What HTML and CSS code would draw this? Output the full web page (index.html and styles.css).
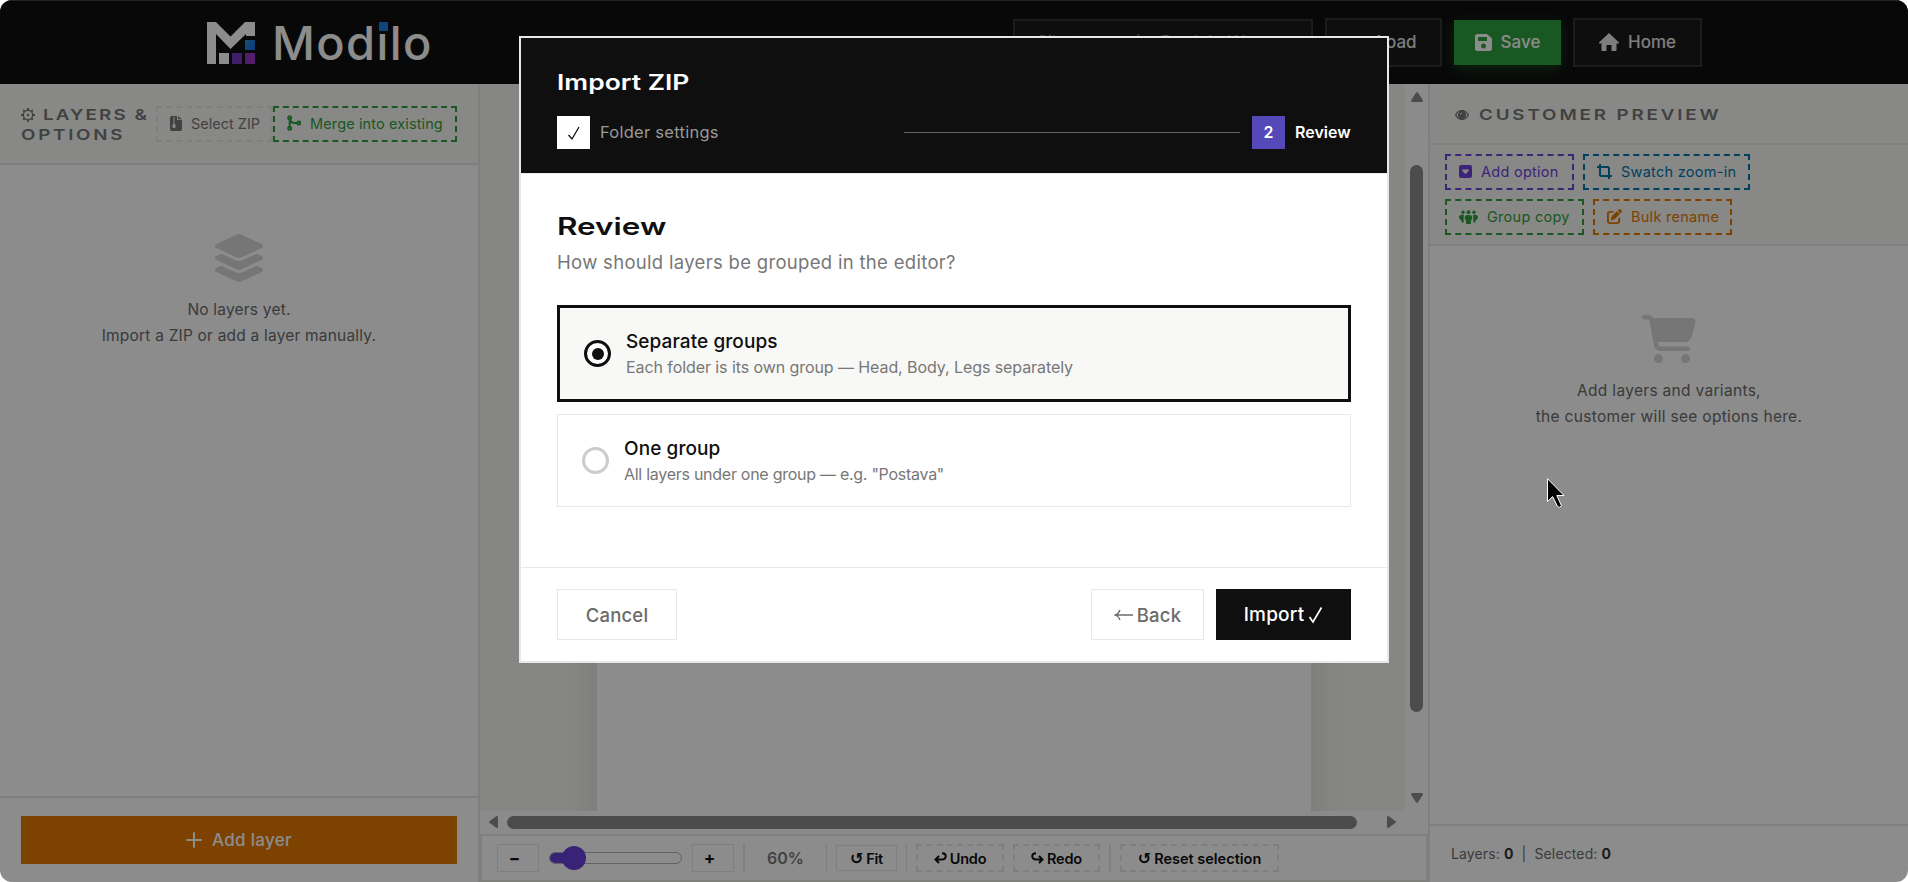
FILE: index.html
```html
<!DOCTYPE html>
<html lang="en">
<head>
    <meta charset="UTF-8">
    <meta name="viewport" content="width=device-width, initial-scale=1.0">
    <title>Modilo</title>
    <link rel="stylesheet" href="styles.css">
</head>
<body>
    <div class="app">
        <header class="topbar">
            <div class="logo">
                <svg class="logo__mark" viewBox="0 0 48 42">
                    <defs>
                        <linearGradient id="blue" x1="0" y1="0" x2="1" y2="1"><stop offset="0" stop-color="#2196c8"/><stop offset="1" stop-color="#1668e8"/></linearGradient>
                        <linearGradient id="violet" x1="0" y1="0" x2="1" y2="1"><stop offset="0" stop-color="#5b3fc0"/><stop offset="1" stop-color="#8a2fc4"/></linearGradient>
                    </defs>
                    <path fill="#fff" d="M0 0H9L23.500 14.500 38 0H48V14H39V12L23.500 27 9 12V42H0zM12 31h10v11H12z"/>
                    <path fill="url(#blue)" d="M38 18h10v10H38z"/>
                    <path fill="url(#violet)" d="M25 31h10v11H25z"/>
                    <path fill="#9a35c4" d="M38 31h10v11H38z"/>
                </svg>
                <span class="logo__text">Mod<span class="logo__i">i</span>lo</span>
            </div>
            <div class="topbar__actions">
                <div class="topbar__input">Silueta na míru Produkt W</div>
                <button class="top-btn top-btn--load">
                    <svg class="icon" width="17" height="15" viewBox="0 0 576 512"><path d="M88.700 223.800L0 375.800V96C0 60.700 28.700 32 64 32H181.500c17 0 33.300 6.700 45.300 18.700L253.300 77.300c12 12 28.300 18.700 45.300 18.700H416c35.300 0 64 28.700 64 64v32H144c-22.800 0-43.800 12.100-55.300 31.800zM144 224H544c24 0 40 24 28 44L460 464c-6 10-16 16-28 16H32c-24 0-40-24-28-44L116 240c6-10 16-16 28-16z"/></svg>
                    <span>Load</span>
                </button>
                <button class="top-btn top-btn--save">
                    <svg class="icon" width="17" height="17" viewBox="0 0 17 17"><path fill-rule="evenodd" d="M2.500 0H12l5 4.500V14.500A2.500 2.500 0 0 1 14.500 17H2.500A2.500 2.500 0 0 1 0 14.500V2.500A2.500 2.500 0 0 1 2.500 0zM3 3v4h9V3zM8.500 9.500a2.500 2.500 0 1 0 .01 0z"/></svg>
                    <span>Save</span>
                </button>
                <button class="top-btn top-btn--home">
                    <svg class="icon" width="20" height="18" viewBox="0 0 20 18"><path d="M10 0L20 9.500V10.500H17.500V17Q17.500 18 16.500 18H12.500V12H7.500V18H3.500Q2.500 18 2.500 17V10.500H0V9.500z"/></svg>
                    <span>Home</span>
                </button>
            </div>
        </header>

        <div class="workspace">
            <section class="panel panel--left">
                <div class="panel__header">
                    <h2 class="panel__title">
                        <svg class="panel__gear" width="14" height="14" viewBox="0 0 14 14"><circle cx="7" cy="7" r="4.700" fill="none" stroke="currentColor" stroke-width="1.400"/><circle cx="7" cy="7" r="1.200"/><path fill="none" stroke="currentColor" stroke-width="1.800" d="M7 0v2M7 12v2M0 7h2M12 7h2M2.200 2.200l1.300 1.300M10.500 10.500l1.300 1.300M2.200 11.800l1.300-1.300M10.500 3.500l1.300-1.300"/></svg>
                        <span class="wide wide--layers">LAYERS &amp;</span>
                        <br>
                        <span class="wide wide--options">OPTIONS</span>
                    </h2>
                    <button class="dash-btn dash-btn--zip">
                        <svg class="icon" width="12" height="15" viewBox="0 0 12 15"><path fill-rule="evenodd" d="M1.800 0H7v4h5v9.200A1.800 1.800 0 0 1 10.200 15H1.800A1.800 1.800 0 0 1 0 13.200V1.800A1.800 1.800 0 0 1 1.800 0zM8 0l4 3.200H8zM3 1.500v1h2v-1zM3 3.500v1h2v-1zM3 5.500v1h2v-1zM3 7.500L2.300 10.500a1.700 1.700 0 1 0 3.400 0L5 7.500z"/></svg>
                        <span>Select ZIP</span>
                    </button>
                    <button class="dash-btn dash-btn--merge">
                        <svg class="icon icon--line" width="14" height="16" viewBox="0 0 14 16"><circle cx="2.700" cy="2.700" r="1.500"/><circle cx="2.700" cy="13.300" r="1.500"/><circle cx="11.800" cy="8" r="1.500"/><path d="M2.700 4.200v7.600M2.900 4.500C3.500 7 5 8 7 8h3.300"/></svg>
                        <span>Merge into existing</span>
                    </button>
                </div>
                <div class="empty empty--layers">
                    <svg class="empty__icon" width="54" height="48" viewBox="0 0 576 512"><path d="M264.500 5.200c14.900-6.900 32.100-6.900 47 0l218.600 101c8.500 3.900 13.900 12.400 13.900 21.800s-5.400 17.900-13.900 21.800l-218.600 101c-14.900 6.900-32.100 6.900-47 0L45.900 149.800C37.400 145.800 32 137.300 32 128s5.400-17.900 13.900-21.800L264.500 5.200zM476.900 209.600l53.200 24.600c8.500 3.900 13.900 12.400 13.900 21.800s-5.400 17.900-13.900 21.800l-218.600 101c-14.900 6.900-32.100 6.900-47 0L45.900 277.800C37.400 273.800 32 265.300 32 256s5.400-17.900 13.900-21.800l53.200-24.600 152 70.200c23.400 10.800 50.400 10.800 73.800 0l152-70.200zm-152 198.200l152-70.200 53.200 24.600c8.500 3.900 13.900 12.400 13.900 21.800s-5.400 17.900-13.900 21.800l-218.600 101c-14.900 6.900-32.100 6.900-47 0L45.900 405.800C37.400 401.800 32 393.300 32 384s5.400-17.900 13.900-21.800l53.200-24.600 152 70.200c23.400 10.800 50.400 10.800 73.800 0z"/></svg>
                    <p class="empty__text">No layers yet.<br>Import a ZIP or add a layer manually.</p>
                </div>
                <div class="panel__footer">
                    <button class="add-btn">
                        <svg width="16" height="16" viewBox="0 0 16 16"><path fill="none" stroke="currentColor" stroke-width="2" stroke-linecap="round" d="M8 1v14M1 8h14"/></svg>
                        <span>Add layer</span>
                    </button>
                </div>
            </section>

            <section class="stage">
                <div class="stage__canvas">
                    <div class="stage__paper"></div>
                </div>
                <div class="vscroll">
                    <svg width="12" height="10" viewBox="0 0 12 10"><path d="M6 0Q6.500 0 7 .8L12 8.500Q12 10 11 10H1Q0 10 0 8.500L5 .8Q5.500 0 6 0z"/></svg>
                    <div class="vscroll__thumb"></div>
                    <svg width="12" height="10" viewBox="0 0 12 10"><path d="M6 10Q6.500 10 7 9.200L12 1.500Q12 0 11 0H1Q0 0 0 1.500L5 9.200Q5.500 10 6 10z"/></svg>
                </div>
                <div class="hscroll">
                    <svg width="9" height="12" viewBox="0 0 9 12"><path d="M0 6Q0 5.500.8 5L7.500 0Q9 0 9 1V11Q9 12 7.500 12L.8 7Q0 6.500 0 6z"/></svg>
                    <div class="hscroll__thumb"></div>
                    <svg width="9" height="12" viewBox="0 0 9 12"><path d="M9 6Q9 5.500 8.200 5L1.500 0Q0 0 0 1V11Q0 12 1.500 12L8.200 7Q9 6.500 9 6z"/></svg>
                </div>
                <div class="toolbar">
                    <button class="tool tool--step">−</button>
                    <div class="slider"><div class="slider__fill"></div><div class="slider__thumb"></div></div>
                    <button class="tool tool--step">+</button>
                    <i class="toolbar__sep toolbar__sep--thick"></i>
                    <span class="toolbar__zoom">60%</span>
                    <i class="toolbar__sep"></i>
                    <button class="tool tool--fit"><span class="tool__glyph">↺</span>Fit</button>
                    <i class="toolbar__sep"></i>
                    <button class="tool tool--dashed tool--undo"><svg class="tool__arrow" width="13" height="12" viewBox="0 0 13 12"><path d="M8 1.200c5 0 5 6.300 0 6.300H1.500M5 4L1.500 7.500 5 11"/></svg>Undo</button>
                    <button class="tool tool--dashed tool--redo"><svg class="tool__arrow" width="13" height="12" viewBox="0 0 13 12"><path d="M5 1.200c-5 0-5 6.300 0 6.300h6.500M8 4l3.500 3.500L8 11"/></svg>Redo</button>
                    <i class="toolbar__sep toolbar__sep--thick"></i>
                    <button class="tool tool--dashed tool--reset"><span class="tool__glyph">↺</span>Reset selection</button>
                </div>
            </section>

            <section class="panel panel--right">
                <div class="panel__header panel__header--preview">
                    <h2 class="panel__title">
                        <svg class="panel__eye" width="14" height="10" viewBox="0 0 14 10"><path fill-rule="evenodd" d="M7 0C10.500 0 13 2.500 14 5 13 7.500 10.500 10 7 10S1 7.500 0 5C1 2.500 3.500 0 7 0zM4.700 1.600A4 4 0 0 0 4.700 8.400 5 5 0 0 1 1.500 5 5 5 0 0 1 4.700 1.600zM9.300 1.600A4 4 0 0 1 9.300 8.400 5 5 0 0 0 12.500 5 5 5 0 0 0 9.300 1.600zM6.500 2.500A2 2 0 0 0 5 4.500H6Q6 3.500 7 3.500z"/></svg>
                        <span class="wide wide--preview">CUSTOMER PREVIEW</span>
                    </h2>
                </div>
                <div class="panel__tools">
                    <button class="dash-btn dash-btn--option">
                        <svg class="icon" width="13" height="13" viewBox="0 0 13 13"><path fill-rule="evenodd" d="M2 0H11A2 2 0 0 1 13 2V11A2 2 0 0 1 11 13H2A2 2 0 0 1 0 11V2A2 2 0 0 1 2 0zM3.500 4.500Q2.700 4.700 3.200 5.500L6 8.700Q6.500 9.200 7 8.700L9.800 5.500Q10.300 4.700 9.500 4.500z"/></svg>
                        <span>Add option</span>
                    </button>
                    <button class="dash-btn dash-btn--swatch">
                        <svg class="icon icon--line" width="15" height="15" viewBox="0 0 15 15"><path d="M0 3h10.500Q12 3 12 4.500V15M3 0v10.500Q3 12 4.500 12H15"/></svg>
                        <span>Swatch zoom-in</span>
                    </button>
                    <button class="dash-btn dash-btn--group">
                        <svg class="icon" width="19" height="14" viewBox="0 0 19 14"><circle cx="4" cy="2.200" r="1.700"/><circle cx="9.500" cy="2.200" r="1.900"/><circle cx="15" cy="2.200" r="1.700"/><path d="M3 4.700H5Q4.700 6 4.700 8V12.500H2.500V10.500Q0 9 0 7.500 0 4.700 3 4.700zM16 4.700H14Q14.300 6 14.300 8V12.500H16.500V10.500Q19 9 19 7.500 19 4.700 16 4.700zM8.500 4.900H10.500Q13.300 4.900 13.300 8 13.300 9.500 12 10.300V13Q12 14 11 14H8Q7 14 7 13V10.300Q5.700 9.500 5.700 8 5.700 4.900 8.500 4.900z"/></svg>
                        <span>Group copy</span>
                    </button>
                    <button class="dash-btn dash-btn--rename">
                        <svg class="icon" width="15" height="15" viewBox="0 0 512 512"><path d="M471.600 21.700c-21.900-21.900-57.300-21.900-79.200 0L362.300 51.700l97.900 97.900 30.100-30.100c21.900-21.900 21.900-57.300 0-79.200L471.600 21.700zm-299.200 220c-6.100 6.100-10.800 13.600-13.500 21.900l-29.600 88.800c-2.900 8.600-.6 18.100 5.800 24.600s15.900 8.700 24.600 5.800l88.800-29.600c8.200-2.700 15.700-7.400 21.900-13.500L437.700 172.300 339.700 74.300 172.400 241.700zM96 64C43 64 0 107 0 160V416c0 53 43 96 96 96H352c53 0 96-43 96-96V320c0-17.700-14.300-32-32-32s-32 14.300-32 32v96c0 17.700-14.300 32-32 32H96c-17.700 0-32-14.300-32-32V160c0-17.700 14.300-32 32-32h96c17.700 0 32-14.300 32-32s-14.300-32-32-32H96z"/></svg>
                        <span>Bulk rename</span>
                    </button>
                </div>
                <div class="empty empty--preview">
                    <svg class="empty__icon" width="54" height="48" viewBox="0 0 576 512"><path d="M0 24C0 10.700 10.700 0 24 0H69.500c22 0 41.500 12.800 50.600 32h411c26.300 0 45.500 25 38.600 50.400l-41 152.300c-8.500 31.400-37 53.300-69.500 53.300H170.700l5.400 28.500c2.200 11.300 12.100 19.500 23.600 19.500H488c13.300 0 24 10.700 24 24s-10.700 24-24 24H199.700c-34.600 0-64.300-24.600-70.700-58.500L77.400 54.500c-.7-3.800-4-6.500-7.900-6.500H24C10.700 48 0 37.300 0 24zM128 464a48 48 0 1 1 96 0 48 48 0 1 1 -96 0zm336-48a48 48 0 1 1 0 96 48 48 0 1 1 0-96z"/></svg>
                    <p class="empty__text">Add layers and variants,<br>the customer will see options here.</p>
                </div>
                <div class="panel__status">Layers: <b>0</b>&nbsp; |&nbsp; Selected: <b>0</b></div>
            </section>
        </div>

        <div class="overlay">
            <div class="modal">
                <div class="modal__header">
                    <h1 class="modal__title"><span class="wide wide--title">Import ZIP</span></h1>
                    <div class="steps">
                        <span class="steps__box"><svg width="14" height="16" viewBox="0 0 14 16"><path class="check check--thin" d="M1.500 10L5 14 12 2"/></svg></span>
                        <span class="steps__label">Folder settings</span>
                        <span class="steps__line"></span>
                        <span class="steps__box steps__box--active">2</span>
                        <span class="steps__label steps__label--active">Review</span>
                    </div>
                </div>
                <div class="modal__body">
                    <h2 class="modal__heading"><span class="wide wide--heading">Review</span></h2>
                    <p class="modal__lead">How should layers be grouped in the editor?</p>
                    <div class="choice choice--selected">
                        <span class="choice__radio"></span>
                        <div>
                            <div class="choice__name">Separate groups</div>
                            <div class="choice__hint">Each folder is its own group — Head, Body, Legs separately</div>
                        </div>
                    </div>
                    <div class="choice">
                        <span class="choice__radio"></span>
                        <div>
                            <div class="choice__name">One group</div>
                            <div class="choice__hint choice__hint--one">All layers under one group — e.g. "Postava"</div>
                        </div>
                    </div>
                </div>
                <div class="modal__footer">
                    <button class="modal-btn modal-btn--cancel">Cancel</button>
                    <button class="modal-btn modal-btn--back">
                        <svg width="19" height="12" viewBox="0 0 19 12"><path fill="none" stroke="currentColor" stroke-width="1.300" d="M19 6H1M6 1Q4.500 5 1 6 4.500 7 6 11"/></svg>
                        <span>Back</span>
                    </button>
                    <button class="modal-btn modal-btn--import">
                        <span>Import</span>
                        <svg width="15" height="18" viewBox="0 0 15 18"><path class="check" d="M1.500 11L5 16 13.500 1.500"/></svg>
                    </button>
                </div>
            </div>
        </div>

        <svg class="cursor" width="18" height="31" viewBox="0 0 18 31"><path fill="#000" stroke="#fff" d="M.5.700V23.500L5.700 18.600 10.500 28.500Q12.500 30.500 14.500 27.800L9.800 17.500H17z"/></svg>
    </div>
</body>
</html>
```
FILE: styles.css
```css
* {
    box-sizing: border-box;
}

body {
    margin: 0;
    background: #fff;

    font-family: Inter, "Liberation Sans", sans-serif;
    color: #0f0f0f;
}

button {
    margin: 0;
    padding: 0;
    border: 0;
    background: transparent;

    font-family: inherit;
    white-space: nowrap;

    cursor: pointer;
}

h1,
h2,
p {
    margin: 0;
}

svg {
    flex: none;
    fill: currentColor;
}

.app {
    position: relative;

    display: flex;
    flex-direction: column;

    width: 1908px;
    height: 882px;

    overflow: hidden;
    border-radius: 12px;
}

.icon--line {
    fill: none;
    stroke: currentColor;
    stroke-width: 2;
}

/* extended headings */
.wide {
    display: inline-block;

    transform: scaleX(1.25);
    transform-origin: left center;
}

.wide--layers {
    letter-spacing: 1.700px;
}

.wide--options {
    letter-spacing: 2.200px;
}

.wide--preview {
    letter-spacing: 2.300px;
}

.wide--heading {
    transform: scaleX(1.31);
}

/* top bar */
.topbar {
    flex: 0 0 84px;

    display: flex;
    align-items: center;
    justify-content: space-between;

    padding: 0 206px 0 207px;
    border-top: 1px solid #444;

    background: #0f0f0f;
    color: #fff;
}

.logo {
    display: flex;
    align-items: center;
    gap: 17px;
}

.logo__mark {
    width: 48px;
    height: 42px;
}

.logo__text {
    font-size: 47px;
    line-height: 46px;
    font-weight: 500;
    letter-spacing: 1.400px;
}

.logo__i {
    position: relative;
}

.logo__i::before {
    position: absolute;
    top: 8px;
    left: 2px;

    width: 9px;
    height: 9px;

    background: #1a7fe0;
    content: '';
}

.topbar__actions {
    display: flex;
    align-items: center;
    gap: 12px;

    padding-bottom: 1px;
}

.topbar__input {
    width: 300px;
    height: 46px;
    padding: 0 22px;
    border: 2px solid #333;

    background: #1a1a1a;
    color: #777;

    font-size: 17px;
    line-height: 42px;
    white-space: nowrap;
}

.top-btn {
    display: flex;
    align-items: center;
    justify-content: center;
    gap: 9px;

    height: 49px;
    border: 2px solid #333;

    background: #1a1a1a;
    color: #e6e6e6;

    font-size: 17px;
    font-weight: 500;
}

.top-btn--load {
    width: 117px;
}

.top-btn--save {
    width: 107px;
    height: 45px;
    border: 0;

    background: #31a041;
    color: #fff;
    box-shadow: 0 4px 12px rgba(49, 160, 65, 0.35);
}

.top-btn--home {
    width: 129px;
}

/* side panels */
.workspace {
    flex: 1;

    display: flex;
    min-height: 0;
}

.panel {
    flex: 0 0 480px;

    display: flex;
    flex-direction: column;

    background: #fff;
}

.panel--left {
    border-right: 2px solid #e8e8e6;
}

.panel--right {
    border-left: 2px solid #e8e8e6;
}

.panel__header {
    flex: 0 0 81px;

    display: flex;
    align-items: center;

    padding: 0 21px;
    border-bottom: 2px solid #e8e8e6;

    background: #f8f8f5;
}

.panel__header--preview {
    flex-basis: 61px;

    padding: 0 25px;
}

.panel__title {
    flex: 0 0 135px;

    padding-top: 2px;

    color: #777;

    font-size: 15px;
    line-height: 20px;
    font-weight: 600;
    white-space: nowrap;
}

.panel__gear {
    margin-right: 4px;

    vertical-align: -2px;
}

.panel__eye {
    margin-right: 6px;
}

.dash-btn {
    display: flex;
    align-items: center;
    gap: 9px;

    height: 36px;
    padding: 0 12px 1px;
    border: 2px dashed currentColor;

    font-size: 14.500px;
    letter-spacing: 0.270px;
}

.dash-btn--zip {
    width: 117px;
    border-color: #e8e8e6;

    color: #777;

    letter-spacing: 0;
}

.dash-btn--merge {
    width: 184px;

    color: #31a041;

    letter-spacing: 0.120px;
}

.dash-btn--option {
    width: 129px;
    color: #6d42dc;
}

.dash-btn--swatch {
    width: 167px;
    color: #0077ad;
}

.dash-btn--group {
    width: 139px;
    color: #31a041;
}

.dash-btn--rename {
    width: 139px;
    color: #e57800;
}

.panel__tools {
    display: flex;
    flex-wrap: wrap;
    align-content: flex-start;
    gap: 9px;

    height: 101px;
    padding: 9px 15px;
    border-bottom: 2px solid #e8e8e6;

    background: #f8f8f5;
}

.empty {
    flex: 1;

    display: flex;
    flex-direction: column;
    align-items: center;
    gap: 15px;

    padding-top: 69px;

    text-align: center;
}

.empty__icon {
    color: #d8d8d8;
}

.empty__text {
    color: #6b6b6b;

    font-size: 15.500px;
    line-height: 26px;
    letter-spacing: 0.200px;
}

.empty--preview .empty__text {
    letter-spacing: 0.310px;
}

.panel__footer {
    height: 86px;
    padding: 18px 21px;
    border-top: 2px solid #e8e8e6;
}

.add-btn {
    display: flex;
    align-items: center;
    justify-content: center;
    gap: 10px;

    width: 436px;
    height: 48px;

    background: #e57800;
    color: #fff;

    font-size: 17px;
    font-weight: 500;
    letter-spacing: 0.300px;
}

.panel__status {
    height: 58px;
    padding: 0 21px;
    border-top: 2px solid #e8e8e6;

    color: #6b6b6b;

    font-size: 14px;
    line-height: 56px;
    letter-spacing: 0.120px;
}

.panel__status b {
    color: #333;
}

/* canvas with its scrollbars */
.stage {
    flex: 1;

    display: grid;
    grid-template-columns: 925px 23px;
    grid-template-rows: 727px 23px 48px;

    background: #fdfdfd;
    color: #8b8b8b;
}

.stage__canvas {
    display: flex;
    justify-content: center;

    padding: 60px 23px 0 46px;
    overflow: hidden;

    background: #f5f5f0;
}

.stage__paper {
    width: 714px;
    margin-bottom: -60px;

    background: #fff;
    box-shadow: 0 8px 40px rgba(0, 0, 0, 0.12);
}

.vscroll {
    display: flex;
    flex-direction: column;
    align-items: center;

    padding: 8px 0 0;
}

.vscroll__thumb {
    width: 13px;
    height: 547px;
    margin: 63px 0 81px;
    border-radius: 7px;

    background: #8b8b8b;
}

.hscroll {
    grid-column: 1 / 3;

    display: flex;
    align-items: center;

    padding: 0 0 1px 9px;
}

.hscroll__thumb {
    width: 850px;
    height: 13px;
    margin: 0 30px 0 9px;
    border-radius: 7px;

    background: #8b8b8b;
}

.toolbar {
    grid-column: 1 / 3;

    display: flex;
    align-items: center;
    gap: 9px;

    padding-left: 15px;
    border: 2px solid #e8e8e6;

    background: #fff;
    color: #0f0f0f;
}

.tool {
    display: flex;
    align-items: center;
    justify-content: center;
    gap: 3px;

    height: 28px;

    color: #0f0f0f;

    font-size: 14.500px;
    font-weight: 600;
    letter-spacing: -0.200px;
}

.tool__glyph {
    font-family: "DejaVu Sans", sans-serif;
    font-size: 16px;
}

.tool__arrow {
    fill: none;
    stroke: currentColor;
    stroke-width: 2;
}

.tool--step {
    width: 42px;
    padding-right: 7px;
    border: 1px solid #e8e8e6;

    font-size: 17px;
    font-weight: 700;
}

.tool--fit {
    width: 61px;
    height: 26px;
    border: 1px solid #e8e8e6;
}

.tool--dashed {
    border: 2px dashed #e8e8e6;
}

.tool--undo {
    width: 88px;
}

.tool--redo {
    width: 87px;
}

.tool--reset {
    width: 159px;

    letter-spacing: 0;
}

.toolbar__sep {
    width: 1px;
    height: 28px;

    background: #e8e8e6;
}

.toolbar__sep--thick {
    width: 2px;
}

.toolbar__zoom {
    width: 63px;

    color: #777;

    font-size: 16px;
    font-weight: 600;
    text-align: center;
}

.slider {
    position: relative;

    width: 133px;
    height: 12px;
    margin: 0 1px;
    border: 1px solid #b2b2b2;
    border-radius: 6px;

    background: #fff;
}

.slider__fill {
    width: 25px;
    height: 10px;
    border-radius: 6px 0 0 6px;

    background: #6740d8;
}

.slider__thumb {
    position: absolute;
    top: -7px;
    left: 12px;

    width: 24px;
    height: 24px;
    border-radius: 50%;

    background: #6740d8;
}

/* import dialog */
.overlay {
    position: absolute;
    inset: 0;

    display: flex;
    justify-content: center;
    align-items: flex-start;

    padding-top: 36px;

    background: rgba(0, 0, 0, 0.45);
}

.modal {
    width: 870px;
    height: 627px;
    border: 2px solid #e8e8e6;

    display: flex;
    flex-direction: column;

    background: #fff;
}

.modal__header {
    height: 136px;
    padding: 30px 36px 0;
    border-bottom: 1px solid #e8e8e6;

    background: #0f0f0f;
    color: #fff;
}

.modal__title {
    font-size: 21px;
    line-height: 30px;
    font-weight: 600;
}

.wide--title {
    transform: scaleX(1.26);
}

.steps {
    display: flex;
    align-items: center;

    margin-top: 18px;
}

.steps__box {
    display: flex;
    align-items: center;
    justify-content: center;

    width: 33px;
    height: 33px;

    background: #fff;
    color: #0f0f0f;

    font-size: 16px;
    font-weight: 600;
}

.steps__box--active {
    padding-bottom: 1px;

    background: #5548b8;
    color: #fff;
}

.steps__label {
    width: 120px;
    margin-left: 10px;
    padding-bottom: 2px;

    color: #999;

    font-size: 16.500px;
    letter-spacing: 0.260px;
    white-space: nowrap;
}

.steps__label--active {
    width: 54px;

    color: #fff;

    font-size: 16px;
    font-weight: 600;
    letter-spacing: 0;
}

.steps__line {
    width: 336px;
    height: 1px;
    margin: 0 12px 0 184px;

    background: #666;
}

.check {
    fill: none;
    stroke: currentColor;
    stroke-width: 1.700;
}

.check--thin {
    stroke-width: 1.300;
}

.modal__body {
    flex: 1;

    padding: 36px 36px 0;
}

.modal__heading {
    font-size: 24px;
    line-height: 34px;
    font-weight: 600;
}

.modal__lead {
    height: 61px;

    color: #777;

    font-size: 18.500px;
    line-height: 36px;
    letter-spacing: 0.310px;
}

.choice {
    display: flex;
    align-items: center;
    gap: 15px;

    height: 93px;
    padding: 0 24px;
    border: 1px solid #e8e8e6;
}

.choice--selected {
    height: 97px;
    margin-bottom: 12px;
    border: 3px solid #0f0f0f;

    background: #f8f8f6;
}

.choice__radio {
    flex: none;

    display: flex;
    align-items: center;
    justify-content: center;

    width: 27px;
    height: 27px;
    border: 3px solid #ccc;
    border-radius: 50%;
}

.choice--selected .choice__radio {
    border-color: #0f0f0f;
    background: #fff;
}

.choice--selected .choice__radio::after {
    width: 12px;
    height: 12px;
    border-radius: 50%;

    background: #0f0f0f;
    content: '';
}

.choice__name {
    padding-top: 1px;

    font-size: 19px;
    line-height: 26px;
    font-weight: 500;
    letter-spacing: 0.080px;
}

.choice__hint {
    color: #777;

    font-size: 16px;
    line-height: 25px;
    letter-spacing: -0.080px;
}

.choice__hint--one {
    letter-spacing: -0.270px;
}

.modal__footer {
    height: 94px;
    padding: 21px 36px 0;
    border-top: 1px solid #e8e8e6;

    display: flex;
    gap: 12px;
}

.modal-btn {
    display: flex;
    align-items: center;
    justify-content: center;
    gap: 4px;

    height: 51px;
    border: 1px solid #e8e8e6;

    color: #6b6b6b;

    font-size: 18.500px;
    font-weight: 500;
    letter-spacing: 0.200px;
}

.modal-btn--cancel {
    width: 120px;
    margin-right: auto;
}

.modal-btn--back {
    width: 113px;
}

.modal-btn--import {
    width: 135px;
    border: 0;

    background: #0f0f0f;
    color: #fff;

    font-size: 19px;
}

.cursor {
    position: absolute;
    left: 1547px;
    top: 478px;
}
```
